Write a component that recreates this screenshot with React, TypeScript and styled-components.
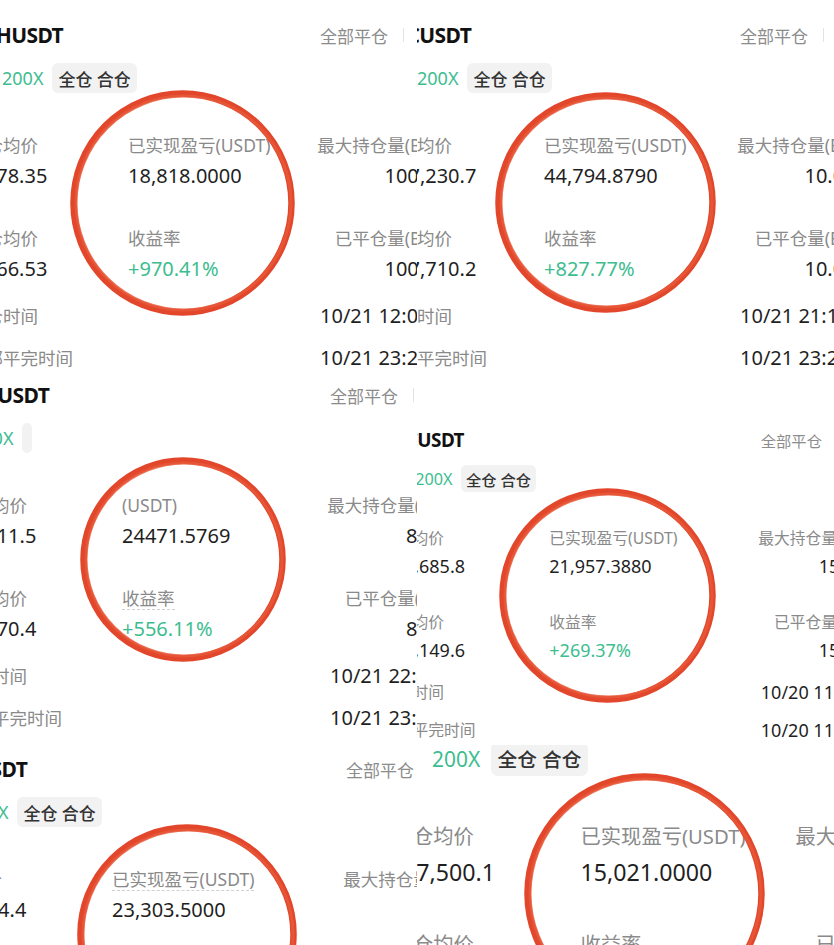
import React from 'react';
import styled, { createGlobalStyle } from 'styled-components';

const GREEN = '#3dbd8f';
const RING = '#e2462b';

const GlobalStyle = createGlobalStyle`
  html, body {
    margin: 0;
    padding: 0;
    background: #fff;
  }
  body {
    font-family: 'Noto Sans', 'Noto Sans CJK SC', sans-serif;
    color: #1f1f1f;
  }
`;

const Collage = styled('main')`
  display: grid;
  grid-template-columns: 417px 417px;
  width: 834px;
  height: 945px;
  overflow: hidden;
  background: #fff;
`;

const Column = styled('div')`
  display: flex;
  flex-direction: column;
`;

const Tile = styled('section')<{ $h: number }>`
  position: relative;
  height: ${(p) => p.$h}px;
  overflow: hidden;
  background: #fff;
`;

// each tile is a crop of a phone screenshot: the card is shifted and scaled inside it
const Card = styled('div')<{ $zoom: number; $dx: number; $dy: number }>`
  zoom: ${(p) => p.$zoom};
  margin-left: ${(p) => p.$dx}px;
  margin-top: ${(p) => p.$dy}px;
  padding-top: 21px;
`;

const Header = styled('div')<{ $cols: string }>`
  display: grid;
  grid-template-columns: ${(p) => p.$cols};
  align-items: center;
  height: 28px;
`;

const Title = styled('h2')<{ $indent: number }>`
  grid-column: 1 / 3;
  margin: 0 0 0 ${(p) => p.$indent}px;
  font-size: 21px;
  font-weight: 700;
  letter-spacing: -0.6px;
  color: #111;
  white-space: nowrap;
`;

const Actions = styled('div')`
  display: flex;
  align-items: center;
  font-size: 17px;
  color: #8c8c8c;
  white-space: nowrap;
`;

const Divider = styled('span')`
  width: 1px;
  height: 14px;
  margin-left: 15px;
  background: #e3e3e3;
`;

const TagRow = styled('div')<{ $indent: number }>`
  display: flex;
  align-items: center;
  gap: 9px;
  height: 30px;
  margin-top: 14px;
  padding-left: ${(p) => p.$indent}px;
`;

const Leverage = styled('span')`
  font-size: 18px;
  color: ${GREEN};
`;

const Tag = styled('span')<{ $w?: number }>`
  display: inline-flex;
  align-items: center;
  height: 30px;
  padding: 0 6px;
  border-radius: 6px;
  background: #f2f2f2;
  color: #333;
  font-size: 17px;
  font-weight: 500;
  white-space: nowrap;
  ${(p) => (p.$w !== undefined ? `width: ${p.$w}px; padding: 0;` : '')}
`;

const Row = styled('div')<{ $cols: string; $mt: number; $h: number }>`
  display: grid;
  grid-template-columns: ${(p) => p.$cols};
  align-items: center;
  height: ${(p) => p.$h}px;
  margin-top: ${(p) => p.$mt}px;
`;

const Label = styled('span')<{ $end?: boolean; $dotted?: boolean }>`
  justify-self: ${(p) => (p.$end ? 'end' : 'start')};
  font-size: 17.5px;
  line-height: 22px;
  color: #8a8a8a;
  white-space: nowrap;
  ${(p) => (p.$dotted ? 'border-bottom: 1px dashed #d0d0d0;' : '')}
`;

const Value = styled('span')<{ $end?: boolean; $up?: boolean; $shift?: number }>`
  justify-self: ${(p) => (p.$end ? 'end' : 'start')};
  margin-left: ${(p) => p.$shift ?? 0}px;
  font-size: 20px;
  line-height: 28px;
  color: ${(p) => (p.$up ? GREEN : '#1f1f1f')};
  white-space: nowrap;
`;

const Ring = styled('svg')<{ $x: number; $y: number }>`
  position: absolute;
  left: ${(p) => p.$x}px;
  top: ${(p) => p.$y}px;
  overflow: visible;
  pointer-events: none;
`;

type Stat = { label: string; value: string; up?: boolean; dotted?: boolean };

type TileSpec = {
  h: number;
  zoom: number;
  dx: number;
  dy: number;
  c1: number;
  c2: number;
  title: string;
  titleIndent: number;
  levIndent: number;
  tag: string;
  tagW?: number;
  valShift: number;
  left: [string, string, string, string];
  mid: [Stat, Stat];
  right: [string, string, string, string];
  times: [string, string, string, string];
  ring: { x: number; y: number; w: number; h: number };
};

const leftColumn: TileSpec[] = [
  {
    h: 382,
    zoom: 1,
    dx: -32,
    dy: 0,
    c1: 160,
    c2: 192,
    title: 'ETHUSDT',
    titleIndent: 5,
    levIndent: 34,
    tag: '全仓 合仓',
    valShift: 0,
    left: ['开仓均价', '2,978.35', '平仓均价', '2,966.53'],
    mid: [
      { label: '已实现盈亏(USDT)', value: '18,818.0000' },
      { label: '收益率', value: '+970.41%', up: true },
    ],
    right: ['最大持仓量(BTC)', '100.00', '已平仓量(BTC)', '100.00'],
    times: ['开仓时间', '10/21 12:06:41', '全部平完时间', '10/21 23:23:17'],
    ring: { x: 70, y: 90, w: 225, h: 226 },
  },
  {
    h: 373,
    zoom: 1,
    dx: -43,
    dy: -22,
    c1: 165,
    c2: 208,
    title: 'BTCUSDT',
    titleIndent: 3,
    levIndent: 15,
    tag: '',
    tagW: 10,
    valShift: 0,
    left: ['开仓均价', '67,211.5', '平仓均价', '67,270.4'],
    mid: [
      { label: '(USDT)', value: '24471.5769' },
      { label: '收益率', value: '+556.11%', up: true, dotted: true },
    ],
    right: ['最大持仓量(BTC)', '8.000', '已平仓量(BTC)', '8.000'],
    times: ['开仓时间', '10/21 22:41:09', '全部平完时间', '10/21 23:52:30'],
    ring: { x: 80, y: 75, w: 206, h: 205 },
  },
  {
    h: 190,
    zoom: 1,
    dx: -68,
    dy: -21,
    c1: 180,
    c2: 234,
    title: 'BTCUSDT',
    titleIndent: 6,
    levIndent: 35,
    tag: '全仓 合仓',
    valShift: 15,
    left: ['开仓均价', '67,894.4', '平仓均价', '67,552.0'],
    mid: [
      { label: '已实现盈亏(USDT)', value: '23,303.5000', dotted: true },
      { label: '收益率', value: '+312.48%', up: true },
    ],
    right: ['最大持仓量(BTC)', '5.000', '已平仓量(BTC)', '5.000'],
    times: ['开仓时间', '10/21 20:14:52', '全部平完时间', '10/21 23:40:11'],
    ring: { x: 77, y: 69, w: 220, h: 220 },
  },
];

const rightColumn: TileSpec[] = [
  {
    h: 422,
    zoom: 1,
    dx: -35,
    dy: 0,
    c1: 162,
    c2: 196,
    title: 'BTCUSDT',
    titleIndent: 0,
    levIndent: 35,
    tag: '全仓 合仓',
    valShift: 15,
    left: ['开仓均价', '67,230.7', '平仓均价', '67,710.2'],
    mid: [
      { label: '已实现盈亏(USDT)', value: '44,794.8790' },
      { label: '收益率', value: '+827.77%', up: true },
    ],
    right: ['最大持仓量(BTC)', '10.000', '已平仓量(BTC)', '10.000'],
    times: ['开仓时间', '10/21 21:16:08', '全部平完时间', '10/21 23:25:42'],
    ring: { x: 78, y: 92, w: 221, h: 221 },
  },
  {
    h: 323,
    zoom: 0.9,
    dx: -40,
    dy: -15,
    c1: 187,
    c2: 235,
    title: 'BTCUSDT',
    titleIndent: 3,
    levIndent: 38,
    tag: '全仓 合仓',
    valShift: 14,
    left: ['开仓均价', '67,685.8', '平仓均价', '67,149.6'],
    mid: [
      { label: '已实现盈亏(USDT)', value: '21,957.3880' },
      { label: '收益率', value: '+269.37%', up: true },
    ],
    right: ['最大持仓量(BTC)', '15.000', '已平仓量(BTC)', '15.000'],
    times: ['开仓时间', '10/20 11:02:17', '全部平完时间', '10/20 11:38:46'],
    ring: { x: 82, y: 66, w: 217, h: 215 },
  },
  {
    h: 200,
    zoom: 1.16,
    dx: -21,
    dy: -66,
    c1: 162,
    c2: 188,
    title: 'BTCUSDT',
    titleIndent: 0,
    levIndent: 34,
    tag: '全仓 合仓',
    valShift: 9,
    left: ['开仓均价', '67,500.1', '平仓均价', '67,613.9'],
    mid: [
      { label: '已实现盈亏(USDT)', value: '15,021.0000' },
      { label: '收益率', value: '+400.52%', up: true },
    ],
    right: ['最大持仓量(BTC)', '5.000', '已平仓量(BTC)', '5.000'],
    times: ['开仓时间', '10/21 09:12:40', '全部平完时间', '10/21 10:03:25'],
    ring: { x: 107, y: 28, w: 241, h: 241 },
  },
];

const HandRing: React.FC<{ x: number; y: number; w: number; h: number }> = ({ x, y, w, h }) => (
  <Ring $x={x} $y={y} width={w} height={h} viewBox={`0 0 ${w} ${h}`}>
    <ellipse cx={w / 2} cy={h / 2} rx={w / 2 - 3.5} ry={h / 2 - 3.5} fill="none" stroke={RING} strokeWidth={6.5} />
    <ellipse
      cx={w / 2 + 1}
      cy={h / 2}
      rx={w / 2 - 5}
      ry={h / 2 - 6}
      fill="none"
      stroke="#e8583a"
      strokeWidth={3}
      opacity={0.85}
    />
  </Ring>
);

const PositionTile: React.FC<{ spec: TileSpec }> = ({ spec }) => {
  const cols = `${spec.c1}px ${spec.c2}px 127px`;
  const [l1, v1, l2, v2] = spec.left;
  const [m1, m2] = spec.mid;
  const [r1, rv1, r2, rv2] = spec.right;
  const [t1, tv1, t2, tv2] = spec.times;

  return (
    <Tile $h={spec.h}>
      <Card $zoom={spec.zoom} $dx={spec.dx} $dy={spec.dy}>
        <Header $cols={cols}>
          <Title $indent={spec.titleIndent}>{spec.title}</Title>
          <Actions>
            全部平仓
            <Divider />
          </Actions>
        </Header>
        <TagRow $indent={spec.levIndent}>
          <Leverage>200X</Leverage>
          <Tag $w={spec.tagW}>{spec.tag}</Tag>
        </TagRow>

        <Row $cols={cols} $mt={40} $h={24}>
          <Label>{l1}</Label>
          <Label $dotted={m1.dotted}>{m1.label}</Label>
          <Label $end>{r1}</Label>
        </Row>
        <Row $cols={cols} $mt={5} $h={28}>
          <Value $shift={spec.valShift}>{v1}</Value>
          <Value $up={m1.up}>{m1.value}</Value>
          <Value $end>{rv1}</Value>
        </Row>
        <Row $cols={cols} $mt={36} $h={24}>
          <Label>{l2}</Label>
          <Label $dotted={m2.dotted}>{m2.label}</Label>
          <Label $end>{r2}</Label>
        </Row>
        <Row $cols={cols} $mt={5} $h={28}>
          <Value $shift={spec.valShift}>{v2}</Value>
          <Value $up={m2.up}>{m2.value}</Value>
          <Value $end>{rv2}</Value>
        </Row>

        <Row $cols={cols} $mt={19} $h={28}>
          <Label>{t1}</Label>
          <span />
          <Value>{tv1}</Value>
        </Row>
        <Row $cols={cols} $mt={14} $h={28}>
          <Label>{t2}</Label>
          <span />
          <Value>{tv2}</Value>
        </Row>
      </Card>
      <HandRing {...spec.ring} />
    </Tile>
  );
};

const App: React.FC = () => {
  return (
    <>
      <GlobalStyle />
      <Collage>
        <Column>
          {leftColumn.map((spec, i) => (
            <PositionTile key={`l${i}`} spec={spec} />
          ))}
        </Column>
        <Column>
          {rightColumn.map((spec, i) => (
            <PositionTile key={`r${i}`} spec={spec} />
          ))}
        </Column>
      </Collage>
    </>
  );
};

export default App;
